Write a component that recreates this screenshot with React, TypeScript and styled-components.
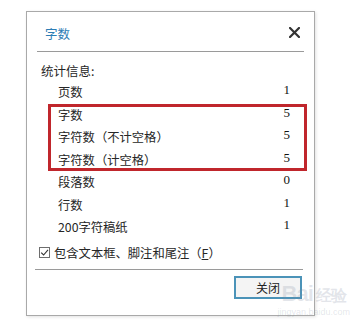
import React from "react";
import styled, {createGlobalStyle} from "styled-components";

const GlobalStyle = createGlobalStyle`
    html, body {
        margin: 0;
        padding: 0;
        background: #ffffff;
    }
    body {
        font-family: "Noto Sans CJK SC", "Noto Sans", sans-serif;
        font-size: 12px;
        color: #262626;
    }
`

const stats = [
    {label: "页数", value: "1"},
    {label: "字数", value: "5", marked: true},
    {label: "字符数（不计空格）", value: "5", marked: true},
    {label: "字符数（计空格）", value: "5", marked: true},
    {label: "段落数", value: "0"},
    {label: "行数", value: "1"},
    {label: "200字符稿纸", value: "1"},
];

const CloseIcon = () => (
    <svg width="11" height="11" viewBox="0 0 11 11">
        <path d="M1 1 L10 10 M10 1 L1 10" stroke="#333" strokeWidth="2.2" strokeLinecap="square"/>
    </svg>
);

const CheckIcon = () => (
    <svg width="9" height="9" viewBox="0 0 9 9">
        <path d="M1.2 4.6 L3.6 7 L8 1.8" fill="none" stroke="#333" strokeWidth="1.1"/>
    </svg>
);

export default function App() {
    const before = stats.filter((s, i) => i < 1);
    const marked = stats.filter(s => s.marked);
    const after = stats.filter((s, i) => i > 3);

    const renderRow = (s: {label: string; value: string}) => (
        <StyledRow key={s.label}>
            <span>{s.label}</span>
            <StyledValue>{s.value}</StyledValue>
        </StyledRow>
    );

    return (
        <StyledPage>
            <GlobalStyle/>
            <StyledDialog>
                <StyledHeader>
                    <StyledTitle>字数</StyledTitle>
                    <StyledClose><CloseIcon/></StyledClose>
                </StyledHeader>
                <StyledBody>
                    <StyledSection>统计信息:</StyledSection>
                    <StyledList>
                        {before.map(renderRow)}
                        <StyledMarked>{marked.map(renderRow)}</StyledMarked>
                        {after.map(renderRow)}
                    </StyledList>
                    <StyledCheckRow>
                        <StyledCheckbox><CheckIcon/></StyledCheckbox>
                        <span>包含文本框、脚注和尾注（<u>F</u>）</span>
                    </StyledCheckRow>
                </StyledBody>
                <StyledFooter>
                    <StyledButton>关闭</StyledButton>
                </StyledFooter>
                <StyledWatermark>
                    <StyledMark>Bai<b>经验</b></StyledMark>
                    <StyledSite>jingyan.baidu.com</StyledSite>
                </StyledWatermark>
            </StyledDialog>
        </StyledPage>
    );
}

const StyledPage = styled.div`
    width: 352px;
    height: 327px;
    padding: 11px 0 0 26px;
    box-sizing: border-box;
`
const StyledDialog = styled.div`
    position: relative;
    width: 289px;
    height: 305px;
    box-sizing: border-box;
    border: 1px solid #a9a9a9;
    box-shadow: 1px 1px 3px rgba(0, 0, 0, 0.12);
    background: #fff;
    display: flex;
    flex-direction: column;
`
const StyledHeader = styled.div`
    height: 39px;
    margin: 0 10px 0 10px;
    padding: 0 4px 0 8px;
    border-bottom: 1px solid #9a9a9a;
    display: flex;
    align-items: center;
    justify-content: space-between;
`
const StyledTitle = styled.span`
    color: #2c7db5;
    font-size: 12.5px;
    padding-top: 3px;
`
const StyledClose = styled.span`
    display: flex;
    padding-top: 2px;
`
const StyledBody = styled.div`
    padding: 8px 0 0 14px;
`
const StyledSection = styled.div`
    height: 21px;
    line-height: 21px;
    font-size: 12.5px;
`
const StyledList = styled.div`
    margin-left: 7px;
    margin-right: 7px;
    font-size: 12.3px;
`
const StyledRow = styled.div`
    height: 22.5px;
    display: flex;
    align-items: center;
    justify-content: space-between;
    padding: 0 17px 0 10px;
`
const StyledValue = styled.span`
    font-family: "Liberation Serif", serif;
    font-size: 13px;
    color: #111;
    margin-top: -4px;
`
const StyledMarked = styled.div`
    box-shadow: inset 0 0 0 3px #c0262c;
`
const StyledCheckRow = styled.div`
    height: 24px;
    display: flex;
    align-items: center;
    gap: 4px;
    margin-left: -2px;
    margin-top: 2px;
    font-size: 12.3px;
`
const StyledCheckbox = styled.span`
    width: 11px;
    height: 11px;
    box-sizing: border-box;
    border: 1px solid #6d6d6d;
    display: flex;
    align-items: center;
    justify-content: center;
`
const StyledFooter = styled.div`
    margin: 4px 11px 0 8px;
    padding-top: 6px;
    border-top: 1px solid #9a9a9a;
    display: flex;
    justify-content: flex-end;
`
const StyledButton = styled.button`
    width: 68px;
    height: 23px;
    box-sizing: border-box;
    border: 2px solid #4b93b8;
    background: #f4f4f4;
    font-family: inherit;
    font-size: 12px;
    color: #222;
    margin-right: 1px;
`
const StyledWatermark = styled.div`
    position: absolute;
    right: -36px;
    bottom: -3px;
    display: flex;
    flex-direction: column;
    align-items: center;
    color: rgba(130, 140, 160, 0.22);
    font-family: "Liberation Sans", sans-serif;
    pointer-events: none;
`
const StyledMark = styled.span`
    font-size: 22px;
    line-height: 22px;
    font-weight: bold;
    letter-spacing: -1px;
    b {
        font-size: 16px;
        margin-left: 3px;
    }
`
const StyledSite = styled.span`
    font-size: 9px;
    line-height: 11px;
`
